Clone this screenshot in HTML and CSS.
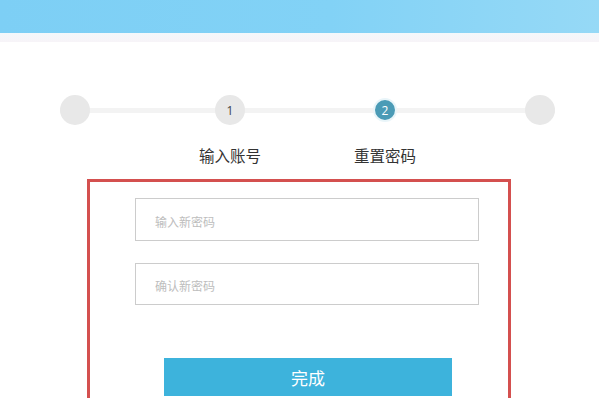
FILE: index.html
```html
<!DOCTYPE html>
<html lang="zh-CN">
<head>
  <meta charset="UTF-8" />
  <title>重置密码</title>
  <link rel="stylesheet" href="styles.css">
</head>
<body>
  <div class="banner"></div>
  <div class="strip"></div>

  <div class="steps">
    <span class="dot big"></span>
    <span class="dot big">1</span>
    <span class="dot active">2</span>
    <span class="dot big"></span>
  </div>
  <div class="labels">
    <span class="slot"></span>
    <span class="slot"><span class="label">输入账号</span></span>
    <span class="slot"><span class="label">重置密码</span></span>
    <span class="slot"></span>
  </div>

  <div class="panel">
    <input type="password" class="field first" placeholder="输入新密码" />
    <input type="password" class="field second" placeholder="确认新密码" />
    <button class="submit">完成</button>
  </div>
</body>
</html>
```

FILE: styles.css
```css
body {
  margin: 0;
  font-family: "Noto Sans CJK SC", "Noto Sans", sans-serif;
  background-color: #fff;
  color: #333;
  overflow: hidden;
}
.banner {
  height: 33px;
  background: linear-gradient(90deg, #7dcff5 0%, #82d2f6 55%, #96d9f6 100%);
}
.strip {
  height: 9px;
  background: linear-gradient(#f3f8fb, #f7f4f8);
}
.steps {
  display: flex;
  justify-content: space-between;
  align-items: center;
  width: 495px;
  height: 30px;
  margin: 53px 0 0 60px;
  background: linear-gradient(#f3f3f3, #f3f3f3) center / 100% 5px no-repeat;
}
.dot {
  display: flex;
  justify-content: center;
  align-items: center;
  width: 30px;
  height: 30px;
  border-radius: 50%;
  font-family: "Open Sans", sans-serif;
  font-size: 12px;
  color: #444;
}
.dot.big {
  background-color: #e8e8e8;
}
.dot.active {
  box-sizing: border-box;
  width: 24px;
  height: 24px;
  margin: 0 3px;
  background-color: #4b9bb6;
  border: 2px solid #e9f5f9;
  color: #fff;
}
.labels {
  display: flex;
  justify-content: space-between;
  width: 495px;
  margin: 20px 0 0 60px;
}
.slot {
  display: flex;
  justify-content: center;
  width: 30px;
}
.label {
  white-space: nowrap;
  font-size: 15.5px;
  line-height: 20px;
  color: #333;
}
.panel {
  display: flex;
  flex-direction: column;
  align-items: flex-start;
  width: 418px;
  height: 216px;
  margin: 14px 0 0 87px;
  border: 3px solid #d4504f;
}
.field {
  width: 344px;
  height: 43px;
  margin-left: 45px;
  padding: 3px 0 0 19px;
  box-sizing: border-box;
  border: 1px solid #cccccc;
  outline: none;
  font-family: inherit;
  font-size: 12px;
}
.field::placeholder {
  color: #bdbdbd;
}
.field.first {
  margin-top: 16px;
}
.field.second {
  margin-top: 22px;
  height: 42px;
}
.submit {
  width: 288px;
  height: 38px;
  margin: 53px 0 0 74px;
  border: none;
  background-color: #3db3dc;
  color: #fff;
  font-family: inherit;
  font-size: 17px;
  cursor: pointer;
}
```
